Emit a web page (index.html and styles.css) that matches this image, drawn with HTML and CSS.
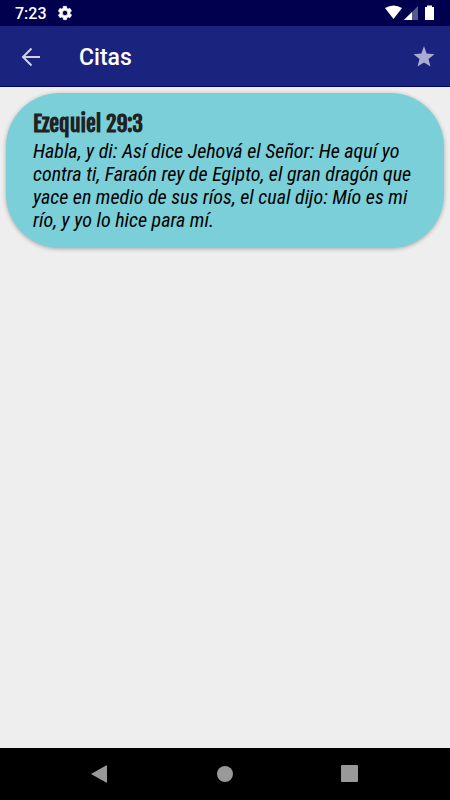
FILE: index.html
```html
<!DOCTYPE html>
<html lang="es">
<head>
<meta charset="utf-8">
<meta name="viewport" content="width=device-width, initial-scale=1">
<title>Citas</title>
<link rel="stylesheet" href="styles.css">
</head>
<body>
<div class="status">
  <span class="clock">7:23</span>
  <svg class="gear" width="16" height="16" viewBox="0 0 24 24" fill="#fff" aria-hidden="true"><path d="M19.4 13c0-.3.1-.6.1-1s0-.7-.1-1l2.100-1.600c.2-.2.3-.4.1-.7l-2-3.400c-.1-.2-.4-.3-.6-.2l-2.500 1c-.5-.4-1.100-.7-1.700-1l-.4-2.600c0-.3-.2-.5-.5-.5h-4c-.3 0-.5.2-.5.5l-.4 2.600c-.6.300-1.200.6-1.700 1l-2.500-1c-.2-.1-.5 0-.6.2l-2 3.400c-.1.200-.1.500.1.700L4.500 11c0 .3-.1.700-.1 1s0 .7.100 1l-2.100 1.600c-.2.200-.3.500-.1.700l2 3.400c.1.200.4.300.6.200l2.500-1c.5.400 1.100.7 1.700 1l.4 2.600c0 .3.200.5.500.5h4c.3 0 .5-.2.500-.5l.4-2.600c.6-.3 1.200-.6 1.700-1l2.500 1c.2.100.5 0 .6-.2l2-3.400c.1-.2.100-.5-.1-.7zM12 16a4 4 0 1 1 0-8 4 4 0 0 1 0 8z" stroke="#fff"/></svg>
  <svg class="signals" width="52" height="16" viewBox="0 0 52 16" fill="#fff" aria-hidden="true">
    <path d="M1 3Q9.500-2 18 3L9.500 14z"/>
    <path d="M34 1v14H20z" opacity=".35"/>
    <path d="M28 7v8h-8z"/>
    <path d="M41 2h2V.5h5V2h2v13h-9z"/>
  </svg>
</div>
<header class="bar">
  <button class="icon" type="button" aria-label="Volver">
    <svg width="24" height="24" viewBox="0 0 24 24" fill="none" stroke="#d1d3e5" stroke-width="2"><path d="M22 12H5M13.500 3.500 5 12l8.500 8.500"/></svg>
  </button>
  <h1>Citas</h1>
  <button class="icon" type="button" aria-label="Favorito">
    <svg width="24" height="24" viewBox="0 0 24 24" fill="#a9abd2"><path d="M12 1 14.600 8.600 22.500 9.200 16.500 14l2 7.500L12 17.500l-6.500 4 2-7.500-6-4.800 7.900-.6z"/></svg>
  </button>
</header>
<main>
  <article class="card">
    <h2>Ezequiel 29:3</h2>
    <p>Habla, y di: Así dice Jehová el Señor: He aquí yo contra ti, Faraón rey de Egipto, el gran dragón que yace en medio de sus ríos, el cual dijo: Mío es mi río, y yo lo hice para mí.</p>
  </article>
</main>
<nav class="nav" aria-label="Sistema">
  <button class="icon" type="button" aria-label="Atrás"><svg width="24" height="24" viewBox="0 0 24 24" fill="#999"><path d="M3 12 18 3.500q1-.5 1 .5v16q0 1-1 .5z"/></svg></button>
  <button class="icon" type="button" aria-label="Inicio"><svg width="24" height="24" viewBox="0 0 24 24" fill="#999"><circle cx="12" cy="12" r="8"/></svg></button>
  <button class="icon" type="button" aria-label="Recientes"><svg width="24" height="24" viewBox="0 0 24 24" fill="#999"><rect x="4" y="3" width="17" height="17" rx="1"/></svg></button>
</nav>
</body>
</html>
```
FILE: styles.css
```css
* { box-sizing: border-box; }
body {
  margin: 0;
  min-height: 100vh;
  display: flex;
  flex-direction: column;
  background: #eee;
  font-family: Roboto, "Liberation Sans", sans-serif;
}
.status {
  display: flex;
  align-items: center;
  height: 26px;
  padding: 0 14px 0 15px;
  background: #00004f;
  color: #fff;
}
.clock { font-size: 16px; font-weight: 500; line-height: 24px; padding-top: 2px; }
.gear { margin-left: 10px; }
.signals { margin-left: auto; }
.bar {
  display: flex;
  align-items: center;
  height: 61px;
  padding: 2px 14px 0 18px;
  background: #1a237e;
  border-bottom: 1px solid #00006b;
  color: #fff;
}
.bar h1 { flex: 1; margin: 2px 0 0 37px; font-size: 23px; font-weight: 500; line-height: 28px; }
.icon {
  display: flex;
  padding: 0;
  border: 0;
  background: none;
}
main { flex: 1; padding: 6px; }
.card {
  padding: 17px 24px 16px 27px;
  border-radius: 54px;
  background: #7bcfd8;
  box-shadow: 0 1px 4px rgba(0, 0, 0, .3);
}
.card h2 {
  margin: 0 0 2px;
  color: #212121;
  font-family: "Fjalla One", "Roboto Condensed", Roboto, sans-serif;
  font-size: 22px;
  font-weight: 700;
  line-height: 28px;
}
.card p {
  margin: 0;
  color: #000;
  font-family: "Roboto Condensed", Roboto, sans-serif;
  font-size: 20px;
  font-style: italic;
  font-weight: 400;
  line-height: 23px;
}
.nav {
  display: flex;
  justify-content: space-between;
  align-items: center;
  height: 52px;
  padding: 0 89px 0 88px;
  background: #000;
}
```
